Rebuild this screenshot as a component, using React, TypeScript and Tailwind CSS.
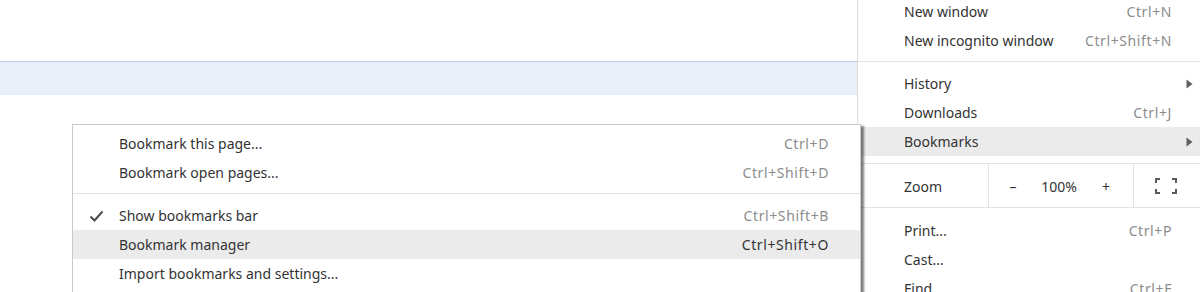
import React from "react";

const font = { fontFamily: '"Noto Sans", "Open Sans", Arial, sans-serif' };

function Arrow() {
  return (
    <svg width="7" height="10" viewBox="0 0 7 10" className="absolute right-[7px] top-1/2 -translate-y-1/2">
      <path d="M0.5 0.5 L6.5 5 L0.5 9.5 Z" fill="#5f5f5f" />
    </svg>
  );
}

function MainItem({ label, shortcut, arrow, active }: { label: string; shortcut?: string; arrow?: boolean; active?: boolean }) {
  return (
    <div className={`relative flex h-[29px] items-center pl-[46px] pr-[28px] ${active ? "bg-[#ebebeb]" : ""}`}>
      <span className="flex-1 text-[#333333]">{label}</span>
      {shortcut && <span className="tracking-[0.6px] text-[#8c8c8c]">{shortcut}</span>}
      {arrow && <Arrow />}
    </div>
  );
}

function SubItem({ label, shortcut, active, checked }: { label: string; shortcut?: string; active?: boolean; checked?: boolean }) {
  return (
    <div className={`relative flex h-[29px] items-center pl-[46px] pr-[31px] ${active ? "bg-[#ebebeb]" : ""}`}>
      {checked && (
        <svg width="15" height="12" viewBox="0 0 15 12" className="absolute left-[16px] top-1/2 -translate-y-1/2">
          <path d="M1.5 6.5 L5.5 10.5 L13.5 1.5" fill="none" stroke="#4a4a4a" strokeWidth="2" />
        </svg>
      )}
      <span className="flex-1 text-[#333333]">{label}</span>
      {shortcut && <span className={`tracking-[0.6px] ${active ? "text-[#333333]" : "text-[#8c8c8c]"}`}>{shortcut}</span>}
    </div>
  );
}

function Sep({ top = 6, bottom = 7 }: { top?: number; bottom?: number }) {
  return (
    <div style={{ paddingTop: top, paddingBottom: bottom }}>
      <div className="h-px bg-[#e3e3e3]" />
    </div>
  );
}

function FullscreenIcon() {
  return (
    <svg width="22" height="16" viewBox="0 0 22 16">
      <g fill="none" stroke="#5a5a5a" strokeWidth="2">
        <path d="M1 5 V1 H5" />
        <path d="M17 1 H21 V5" />
        <path d="M1 11 V15 H5" />
        <path d="M17 15 H21 V11" />
      </g>
    </svg>
  );
}

export default function App() {
  return (
    <div className="relative h-[292px] w-[1200px] overflow-hidden bg-white text-[14px]" style={font}>
      <div className="flex h-full">
        <div className="flex-1">
          <div className="h-[61px] bg-white" />
          <div className="h-[1px] bg-[#bccfe6]" />
          <div className="h-[33px] bg-[#e9eff9]" />
        </div>
        <div className="w-px bg-[#dcdcdc]" />
        <div className="w-[342px] bg-white">
          <div className="-mt-[3px]">
            <MainItem label="New window" shortcut="Ctrl+N" />
            <MainItem label="New incognito window" shortcut="Ctrl+Shift+N" />
            <Sep top={6} bottom={7} />
            <MainItem label="History" arrow />
            <MainItem label="Downloads" shortcut="Ctrl+J" />
            <MainItem label="Bookmarks" arrow active />
            <Sep top={7} bottom={0} />
            <div className="flex h-[43px] items-center">
              <div className="flex h-full w-[130px] items-center pl-[46px] pt-[1px] text-[#333333]">Zoom</div>
              <div className="h-full w-px bg-[#e3e3e3]" />
              <div className="flex h-full w-[144px] items-center pt-[1px] text-[#333333]">
                <span className="w-[48px] text-center">–</span>
                <span className="w-[44px] text-center">100%</span>
                <span className="w-[50px] text-center">+</span>
              </div>
              <div className="h-full w-px bg-[#e3e3e3]" />
              <div className="flex h-full flex-1 items-center justify-center pr-[3px] pt-[1px]">
                <FullscreenIcon />
              </div>
            </div>
            <Sep top={0} bottom={8} />
            <MainItem label="Print..." shortcut="Ctrl+P" />
            <MainItem label="Cast..." />
            <MainItem label="Find..." shortcut="Ctrl+F" />
          </div>
        </div>
      </div>

      <div className="absolute left-[72px] top-[124px] w-[789px] border border-[#c9c9c9] bg-white pt-[4px] shadow-[3px_2px_2px_rgba(0,0,0,0.5)]">
        <SubItem label="Bookmark this page..." shortcut="Ctrl+D" />
        <SubItem label="Bookmark open pages..." shortcut="Ctrl+Shift+D" />
        <Sep top={6} bottom={7} />
        <SubItem label="Show bookmarks bar" shortcut="Ctrl+Shift+B" checked />
        <SubItem label="Bookmark manager" shortcut="Ctrl+Shift+O" active />
        <SubItem label="Import bookmarks and settings..." />
        <SubItem label="" />
      </div>
    </div>
  );
}
